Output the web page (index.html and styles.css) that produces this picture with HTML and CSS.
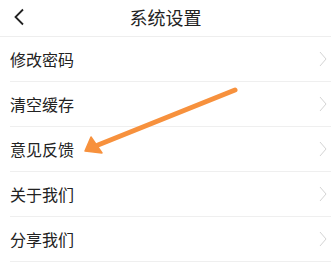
FILE: index.html
```html
<!DOCTYPE html>
<html lang="zh">
<head>
<meta charset="utf-8">
<link rel="stylesheet" href="styles.css">
</head>
<body>
<div class="page">
  <header class="header">
    <svg class="back" width="12" height="18" viewBox="0 0 12 18"><path d="M10 1.5 L2.5 9 L10 16.5" fill="none" stroke="#222" stroke-width="1.8"/></svg>
    <div class="title">系统设置</div>
  </header>
  <ul class="list">
    <li class="row"><span>修改密码</span><svg class="chev" width="8" height="16" viewBox="0 0 8 16"><path d="M1 1 L7 8 L1 15" fill="none" stroke="#d4d4d4" stroke-width="1"/></svg></li>
    <li class="row"><span>清空缓存</span><svg class="chev" width="8" height="16" viewBox="0 0 8 16"><path d="M1 1 L7 8 L1 15" fill="none" stroke="#d4d4d4" stroke-width="1"/></svg></li>
    <li class="row"><span>意见反馈</span><svg class="chev" width="8" height="16" viewBox="0 0 8 16"><path d="M1 1 L7 8 L1 15" fill="none" stroke="#d4d4d4" stroke-width="1"/></svg></li>
    <li class="row"><span>关于我们</span><svg class="chev" width="8" height="16" viewBox="0 0 8 16"><path d="M1 1 L7 8 L1 15" fill="none" stroke="#d4d4d4" stroke-width="1"/></svg></li>
    <li class="row"><span>分享我们</span><svg class="chev" width="8" height="16" viewBox="0 0 8 16"><path d="M1 1 L7 8 L1 15" fill="none" stroke="#d4d4d4" stroke-width="1"/></svg></li>
  </ul>
  <svg class="arrow" width="331" height="269" viewBox="0 0 331 269">
    <line x1="235" y1="90" x2="98" y2="145" stroke="#f7913d" stroke-width="5" stroke-linecap="round"/>
    <polygon points="85,151 91,137 102,153" fill="#f7913d" stroke="#f7913d" stroke-width="1.5" stroke-linejoin="round"/>
  </svg>
</div>
</body>
</html>
```
FILE: styles.css
```css
* { box-sizing: border-box; }
html, body { margin: 0; padding: 0; background: #fff; }
body { font-family: "Noto Sans CJK SC", "Noto Sans", sans-serif; color: #222; }
.page { position: relative; width: 331px; height: 269px; overflow: hidden; }
.header {
  height: 37px;
  border-bottom: 1px solid #eeeeee;
  display: flex;
  align-items: center;
  justify-content: center;
  position: relative;
}
.back { position: absolute; left: 13px; top: 8px; }
.title { font-size: 18px; line-height: 1; color: #222; margin-top: -2px; }
.list { list-style: none; margin: 0; padding: 0 0 0 10px; }
.row {
  height: 45px;
  border-bottom: 1px solid #efefef;
  display: flex;
  align-items: center;
  justify-content: space-between;
  padding-right: 4px;
  font-size: 16px;
  color: #222;
}
.row span { margin-top: -1px; }
.chev { display: block; }
.arrow { position: absolute; left: 0; top: 0; pointer-events: none; }
```
